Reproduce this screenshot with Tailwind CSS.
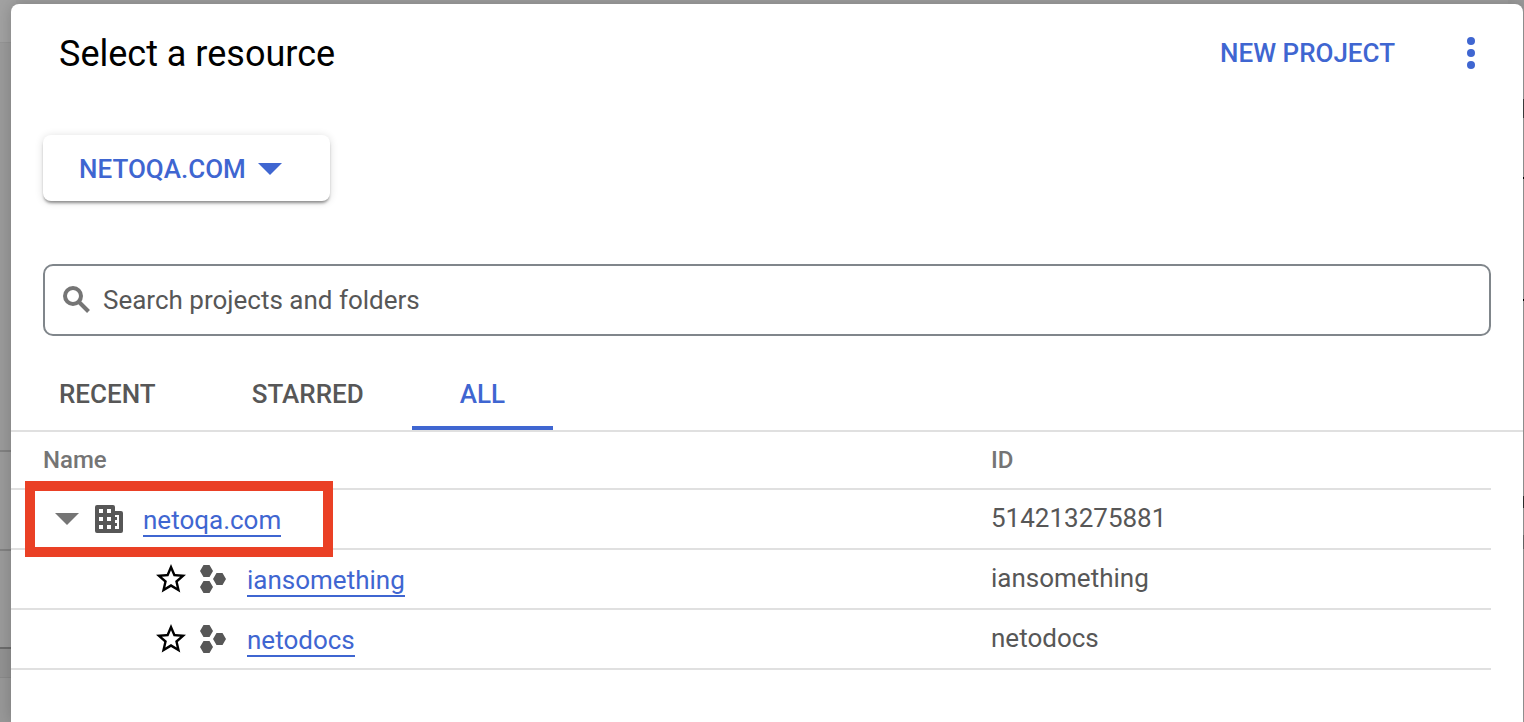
<!DOCTYPE html>
<html lang="en">
<head>
<meta charset="utf-8">
<meta name="viewport" content="width=device-width, initial-scale=1">
<title>Select a resource</title>
<script src="https://cdn.jsdelivr.net/npm/@tailwindcss/browser@4"></script>
</head>
<body class="relative flex min-h-screen flex-col overflow-x-hidden bg-[#9f9f9f] font-[Roboto,sans-serif] text-[26px] leading-8 text-[#575757]">

<!-- Dimmed page behind the dialog -->
<div class="absolute inset-0 flex justify-between" aria-hidden="true">
  <div class="flex w-4 flex-col">
    <div class="h-[42px] bg-[#a2a2a2]"></div>
    <div class="h-[408px] border-t border-[#959595] bg-[#9b9b9b]"></div>
    <div class="h-[99px] border-t-2 border-[#828282] bg-[#9b9b9b]"></div>
    <div class="h-[98px] border-t-2 border-[#828282] bg-[#9b9b9b]"></div>
    <div class="h-[30px] border-t-2 border-[#6c6c6c] bg-[#929292]"></div>
    <div class="flex-1 border-t border-[#8a8a8a] bg-[#989898]"></div>
  </div>
  <div class="flex w-4 flex-col bg-[#9b9b9b]">
    <div class="mt-[99px] h-[19px] bg-[#404040]"></div>
    <div class="mt-[59px] h-0.5 bg-black"></div>
    <div class="mt-[120px] h-0.5 bg-black"></div>
    <div class="mt-[195px] h-3 bg-[#303030]"></div>
    <div class="mt-[27px] h-[14px] bg-[#6c6c6c]"></div>
  </div>
</div>

<main role="dialog" aria-labelledby="title" class="relative mt-1 mr-px ml-[11px] flex-1 rounded-t-lg bg-white shadow-[0_0_16px_rgba(0,0,0,0.2)]">
  <header class="flex items-center pt-6 pr-7 pl-12">
    <h1 id="title" class="flex-1 pt-0.5 text-4xl leading-12 text-black">Select a resource</h1>
    <button type="button" class="font-medium text-[#3f66d1]">NEW PROJECT</button>
    <button type="button" aria-label="More options" class="ml-[52px] text-[#3f66d1]">
      <svg class="size-12" viewBox="0 0 24 24" fill="currentColor"><circle cx="12" cy="6" r="2"/><circle cx="12" cy="12" r="2"/><circle cx="12" cy="18" r="2"/></svg>
    </button>
  </header>

  <div class="px-8 pt-[57px]">
    <button type="button" class="flex h-[66px] items-center gap-3 rounded-lg bg-white pt-0.5 pr-12 pl-9 font-medium text-[#3f66d1] shadow-[0_3px_3px_-1px_rgba(0,0,0,0.4),0_1px_8px_rgba(0,0,0,0.14)]">
      NETOQA.COM
      <svg class="h-3 w-6" viewBox="0 0 24 12" fill="currentColor"><path d="M0 0h24L12 12z"/></svg>
    </button>

    <label class="mt-[63px] flex h-[72px] items-center gap-2 rounded-[10px] border-2 border-[#80868b] px-[14px]">
      <svg class="size-9 shrink-0 text-[#757575]" viewBox="0 0 36 36" fill="none" stroke="currentColor" stroke-width="4"><circle cx="14" cy="14" r="8"/><path d="M19.500 19.500l10 10"/></svg>
      <input type="text" aria-label="Search projects and folders" placeholder="Search projects and folders" class="min-w-0 flex-1 outline-none placeholder:text-[#575757]">
    </label>
  </div>

  <div role="tablist" class="mt-[22px] flex h-[74px] border-b-2 border-[#e0e0e0] font-medium">
    <button type="button" role="tab" aria-selected="false" class="border-b-4 border-transparent px-12 pt-1">RECENT</button>
    <button type="button" role="tab" aria-selected="false" class="border-b-4 border-transparent px-12 pt-1">STARRED</button>
    <button type="button" role="tab" aria-selected="true" class="border-b-4 border-[#3f66d1] px-12 pt-1 text-[#3f66d1]">ALL</button>
  </div>

  <div class="pr-8">
    <table class="w-full table-fixed border-separate border-spacing-0 text-left">
      <thead class="text-2xl text-[#757575]">
        <tr class="h-[58px]">
          <th scope="col" class="border-b-2 border-[#e0e0e0] pl-8 font-medium">Name</th>
          <th scope="col" class="w-[500px] border-b-2 border-[#e0e0e0] font-medium">ID</th>
        </tr>
      </thead>
      <tbody>
        <tr class="h-[60px]">
          <td class="relative border-b-2 border-[#e0e0e0]">
            <div class="flex items-center pl-11">
              <button type="button" aria-label="Collapse netoqa.com" class="text-[#757575]">
                <svg class="h-3 w-6" viewBox="0 0 24 12" fill="currentColor"><path d="M0 0h24L12 12z"/></svg>
              </button>
              <svg class="ml-4 size-7" viewBox="0 0 28 28" fill="currentColor" fill-rule="evenodd"><path d="M2 0h16a2 2 0 0 1 2 2v4h6a2 2 0 0 1 2 2v18a2 2 0 0 1-2 2H2a2 2 0 0 1-2-2V2a2 2 0 0 1 2-2zM4 4v4h4V4zM12 4v4h4V4zM4 12v4h4v-4zM12 12v4h4v-4zM4 20v4h4v-4zM12 20v4h4v-4zM20 10v2h2v3h-2v3h2v3h-2v3h4V10z"/></svg>
              <a href="#netoqa" class="mt-1 ml-5 border-b-2 border-[#3f66d1] leading-[30px] text-[#3f66d1]">netoqa.com</a>
            </div>
            <div class="pointer-events-none absolute -top-[9px] left-[14px] h-[76px] w-[308px] border-10 border-[#ea4025]"></div>
          </td>
          <td class="border-b-2 border-[#e0e0e0] pb-0.5">514213275881</td>
        </tr>
        <tr class="h-[60px]">
          <td class="border-b-2 border-[#e0e0e0]">
            <div class="flex items-center pl-[142px]">
              <button type="button" aria-label="Star iansomething" class="text-black">
                <svg class="size-9" viewBox="0 0 24 24" fill="currentColor"><path d="M22 9.240l-7.190-.62L12 2 9.190 8.630 2 9.240l5.460 4.730L5.820 21 12 17.270 18.180 21l-1.630-7.030L22 9.240zM12 15.400l-3.760 2.270 1-4.280-3.320-2.880 4.380-.38L12 6.100l1.710 4.040 4.380.38-3.320 2.880 1 4.280L12 15.400z"/></svg>
              </button>
              <svg class="ml-[11px] h-7 w-[26px]" viewBox="0 0 26 28" fill="currentColor"><path d="M3.500 0h6L13 6l-3.500 6h-6L0 6zM3.500 16h6L13 22l-3.500 6h-6L0 22zM16.500 8h6L26 14l-3.500 6h-6L13 14z"/></svg>
              <a href="#iansomething" class="mt-1 ml-[21px] border-b-2 border-[#3f66d1] leading-[30px] text-[#3f66d1]">iansomething</a>
            </div>
          </td>
          <td class="border-b-2 border-[#e0e0e0] pb-0.5">iansomething</td>
        </tr>
        <tr class="h-[60px]">
          <td class="border-b-2 border-[#e0e0e0]">
            <div class="flex items-center pl-[142px]">
              <button type="button" aria-label="Star netodocs" class="text-black">
                <svg class="size-9" viewBox="0 0 24 24" fill="currentColor"><path d="M22 9.240l-7.190-.62L12 2 9.190 8.630 2 9.240l5.460 4.730L5.820 21 12 17.270 18.180 21l-1.630-7.030L22 9.240zM12 15.400l-3.760 2.270 1-4.280-3.320-2.880 4.380-.38L12 6.100l1.710 4.040 4.380.38-3.320 2.880 1 4.280L12 15.400z"/></svg>
              </button>
              <svg class="ml-[11px] h-7 w-[26px]" viewBox="0 0 26 28" fill="currentColor"><path d="M3.500 0h6L13 6l-3.500 6h-6L0 6zM3.500 16h6L13 22l-3.500 6h-6L0 22zM16.500 8h6L26 14l-3.500 6h-6L13 14z"/></svg>
              <a href="#netodocs" class="mt-1 ml-[21px] border-b-2 border-[#3f66d1] leading-[30px] text-[#3f66d1]">netodocs</a>
            </div>
          </td>
          <td class="border-b-2 border-[#e0e0e0] pb-0.5">netodocs</td>
        </tr>
      </tbody>
    </table>
  </div>
</main>
</body>
</html>
